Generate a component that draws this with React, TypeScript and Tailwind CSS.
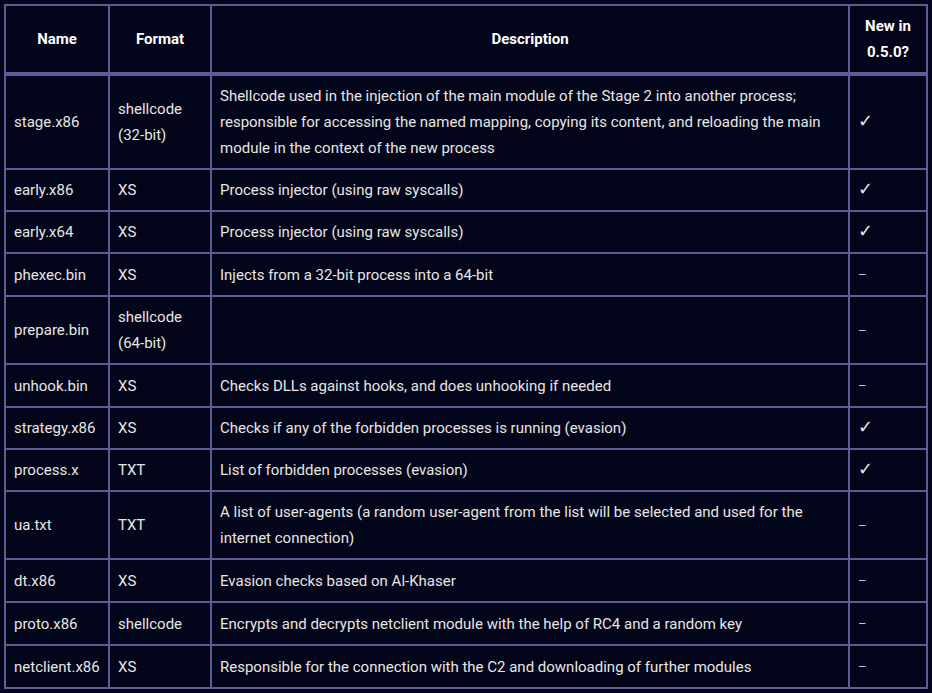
const ROWS: { name: string; format: string[]; desc: string; isNew: boolean }[] = [
  {
    name: "stage.x86",
    format: ["shellcode", "(32-bit)"],
    desc: "Shellcode used in the injection of the main module of the Stage 2 into another process; responsible for accessing the named mapping, copying its content, and reloading the main module in the context of the new process",
    isNew: true,
  },
  { name: "early.x86", format: ["XS"], desc: "Process injector (using raw syscalls)", isNew: true },
  { name: "early.x64", format: ["XS"], desc: "Process injector (using raw syscalls)", isNew: true },
  { name: "phexec.bin", format: ["XS"], desc: "Injects from a 32-bit process into a 64-bit", isNew: false },
  { name: "prepare.bin", format: ["shellcode", "(64-bit)"], desc: "", isNew: false },
  { name: "unhook.bin", format: ["XS"], desc: "Checks DLLs against hooks, and does unhooking if needed", isNew: false },
  { name: "strategy.x86", format: ["XS"], desc: "Checks if any of the forbidden processes is running (evasion)", isNew: true },
  { name: "process.x", format: ["TXT"], desc: "List of forbidden processes (evasion)", isNew: true },
  {
    name: "ua.txt",
    format: ["TXT"],
    desc: "A list of user-agents (a random user-agent from the list will be selected and used for the internet connection)",
    isNew: false,
  },
  { name: "dt.x86", format: ["XS"], desc: "Evasion checks based on Al-Khaser", isNew: false },
  { name: "proto.x86", format: ["shellcode"], desc: "Encrypts and decrypts netclient module with the help of RC4 and a random key", isNew: false },
  { name: "netclient.x86", format: ["XS"], desc: "Responsible for the connection with the C2 and downloading of further modules", isNew: false },
];

const cell = "border-2 border-[#5f5b96] px-2 py-[7px] align-middle";
const head = "border-2 border-b-4 border-[#5f5b96] px-2 py-[7px] text-center align-middle font-bold text-white";

export default function App() {
  return (
    <div className="min-h-[693px] w-[932px] bg-[#03051a] p-1 font-['Roboto',sans-serif] text-[15px] leading-[26px] text-[#e8e6e2]">
      <table className="w-[924px] table-fixed border-collapse border-2 border-[#5f5b96]">
        <colgroup>
          <col className="w-[104px]" />
          <col className="w-[102px]" />
          <col className="w-[638px]" />
          <col />
        </colgroup>
        <thead>
          <tr>
            <th className={head}>Name</th>
            <th className={head}>Format</th>
            <th className={head}>Description</th>
            <th className={head}>
              New in
              <br />
              0.5.0?
            </th>
          </tr>
        </thead>
        <tbody>
          {ROWS.map((r) => (
            <tr key={r.name}>
              <td className={cell}>{r.name}</td>
              <td className={cell}>
                {r.format.map((f, i) => (
                  <div key={i}>{f}</div>
                ))}
              </td>
              <td className={cell}>{r.desc}</td>
              <td className={cell}>
                {r.isNew ? (
                  <span className="font-['DejaVu_Sans',sans-serif] text-[18px] leading-none">✓</span>
                ) : (
                  <span className="text-[13px] text-[#c8c6c2]">–</span>
                )}
              </td>
            </tr>
          ))}
        </tbody>
      </table>
    </div>
  );
}
